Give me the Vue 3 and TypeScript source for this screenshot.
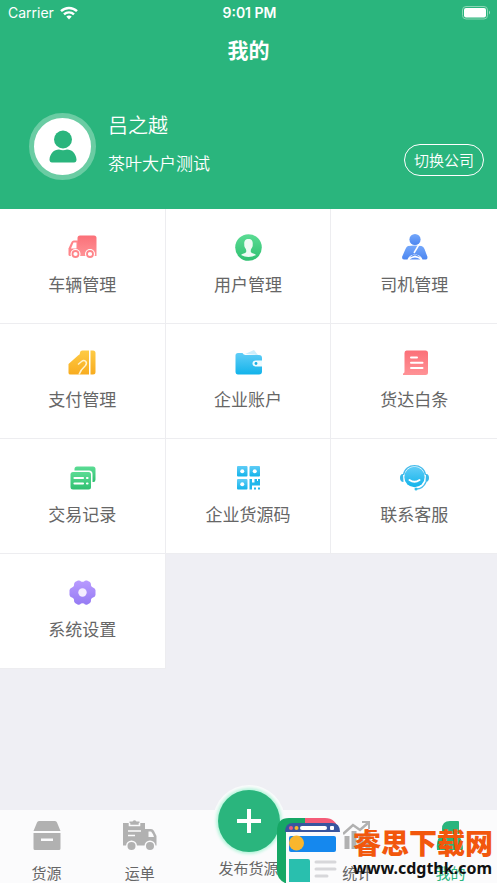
<script setup lang="ts">
interface MenuItem {
  id: string
  label: string
}

const menu: MenuItem[] = [
  { id: 'truck', label: '车辆管理' },
  { id: 'user', label: '用户管理' },
  { id: 'driver', label: '司机管理' },
  { id: 'pay', label: '支付管理' },
  { id: 'wallet', label: '企业账户' },
  { id: 'note', label: '货达白条' },
  { id: 'records', label: '交易记录' },
  { id: 'qr', label: '企业货源码' },
  { id: 'service', label: '联系客服' },
  { id: 'settings', label: '系统设置' },
]
</script>

<template>
  <div class="screen">
    <svg class="defs" aria-hidden="true">
      <defs>
        <linearGradient id="g-red" x1="0" y1="0" x2="0" y2="1"><stop offset="0" stop-color="#fb7078" /><stop offset="1" stop-color="#ff9296" /></linearGradient>
        <linearGradient id="g-green" x1="0" y1="0" x2="0" y2="1"><stop offset="0" stop-color="#5bdc94" /><stop offset="1" stop-color="#2fc071" /></linearGradient>
        <linearGradient id="g-blue" x1="0" y1="0" x2="0" y2="1"><stop offset="0" stop-color="#75a8fb" /><stop offset="1" stop-color="#4c86f0" /></linearGradient>
        <linearGradient id="g-gold" x1="0" y1="0" x2="0" y2="1"><stop offset="0" stop-color="#fecb45" /><stop offset="1" stop-color="#f8ac1f" /></linearGradient>
        <linearGradient id="g-cyan" x1="0" y1="0" x2="0" y2="1"><stop offset="0" stop-color="#60cdf7" /><stop offset="1" stop-color="#12b3ea" /></linearGradient>
        <linearGradient id="g-purple" x1="0" y1="0" x2="0" y2="1"><stop offset="0" stop-color="#b99bff" /><stop offset="1" stop-color="#957bf3" /></linearGradient>
      </defs>
    </svg>

    <header class="header">
      <div class="status">
        <div class="carrier">
          <span>Carrier</span>
          <svg width="18" height="14" viewBox="0 0 18 14" fill="none" stroke="#fff" stroke-width="2.4">
            <path d="M1 5.2C5.5 .9 12.500 .9 17 5.200M4 8.400C6.800 5.700 11.200 5.700 14 8.400" />
            <path d="M6.300 10.600C7.800 9.200 10.200 9.200 11.700 10.600L9 13.400Z" fill="#fff" stroke="none" />
          </svg>
        </div>
        <span class="time">9:01 PM</span>
        <svg class="battery" width="29" height="14" viewBox="0 0 29 14">
          <rect x=".5" y=".5" width="25" height="12.500" rx="3.500" fill="none" stroke="#8ad6b5" />
          <rect x="2" y="2" width="22" height="9.500" rx="2" fill="#fff" />
          <path d="M27 4.500Q29 6.500 27 8.500Z" fill="#a2dfc4" />
        </svg>
      </div>
      <h1 class="title">我的</h1>
      <div class="profile">
        <div class="avatar">
          <svg width="28" height="34" viewBox="0 0 28 34" fill="#2ab57d">
            <circle cx="14" cy="9.500" r="9" />
            <path d="M.5 29.500C1 23.500 5 19.500 10 19.500Q14 21 18 19.500C23 19.500 27 23.500 27.500 29.500Q27.500 32.500 25 32.500H3Q.5 32.500 .5 29.500Z" />
          </svg>
        </div>
        <div class="who">
          <div class="name">吕之越</div>
          <div class="company">茶叶大户测试</div>
        </div>
        <button class="switch" type="button">切换公司</button>
      </div>
    </header>

    <main class="grid">
      <a v-for="item in menu" :key="item.id" class="cell" href="#">
        <svg class="icon" viewBox="0 0 32 32" aria-hidden="true">
          <g v-if="item.id === 'truck'">
            <path d="M11.500 6Q11.500 3.500 14 3.500H28Q30.500 3.500 30.500 6V24H11.500Z" fill="url(#g-red)" />
            <path d="M12 8.500H7.800Q6.200 8.500 5.500 10L2.500 16.500V22.500Q2.500 24 4 24H12Z" fill="#ff858a" />
            <path d="M10.500 10.500V16.500H5L7.500 10.500Z" fill="#fff" />
            <circle cx="9.500" cy="22" r="5" fill="#fff" /><circle cx="24" cy="22" r="5" fill="#fff" />
            <circle cx="9.500" cy="22" r="3" fill="none" stroke="#ff858a" stroke-width="1.800" /><circle cx="24" cy="22" r="3" fill="none" stroke="#ff858a" stroke-width="1.800" />
          </g>
          <g v-else-if="item.id === 'user'">
            <circle cx="16.500" cy="15.500" r="13.300" fill="url(#g-green)" />
            <path d="M16.500 7C12.800 7 12 9.500 12.300 12.500C12 15 13.200 15.500 14.200 18V20C13 21.500 10.500 21.500 9 23Q16.500 27 24 23C22.500 21.500 20 21.500 18.800 20V18C19.800 15.500 21 15 20.700 12.500C21 9.500 20.200 7 16.500 7Z" fill="#eefbf4" />
          </g>
          <g v-else-if="item.id === 'driver'">
            <circle cx="17" cy="7.500" r="5.600" fill="url(#g-blue)" />
            <path d="M10 14Q17 13 23.500 14Q25.500 14.500 26.500 17L29.500 25Q29.500 27.500 28 27.500H6Q4 27.500 4 25L7.500 17Q8.500 14.500 10 14Z" fill="url(#g-blue)" />
            <path d="M21 12.500L16 21" fill="none" stroke="#fff" stroke-width="1.500" />
            <path d="M9.500 28C10.500 20.500 23.500 20.500 24.500 28Z" fill="#fff" />
            <path d="M11.500 25.500Q17 19.500 22.500 25.500L17 23.500ZM11.500 27.500Q17 23.500 22.500 27.500Z" fill="#5c92f4" />
          </g>
          <g v-else-if="item.id === 'pay'">
            <path d="M14 6Q14 3.500 16.500 3.500H23V27.500H4.500Q2.500 27.500 2.500 26V17L12 8.500Q14 7.500 14 6ZM24.500 3.500H27Q29.500 3.500 29.500 6V25Q29.500 27.500 27 27.500H24.500Z" fill="url(#g-gold)" />
            <path d="M12 17.500L15.500 14.500C18.500 12 22 15 19.500 18.500Q14.500 23 13 27.500" fill="none" stroke="#fff3cd" stroke-width="1.500" />
          </g>
          <g v-else-if="item.id === 'wallet'">
            <path d="M13 7L22 3L26 8Z" fill="#cceefc" />
            <path d="M6 6H10.500Q11.500 8 13.500 8H27Q30 8 30 11V24.500Q30 27.500 27 27.500H6Q3.500 27.500 3.500 24.500V8.500Q3.500 6 6 6Z" fill="url(#g-cyan)" />
            <path d="M30 13.500H24Q20.500 13.500 20.500 16.500T24 19.500H30Z" fill="#eefbff" /><circle cx="24" cy="16.500" r="1.400" fill="#19afe3" />
          </g>
          <g v-else-if="item.id === 'note'">
            <path d="M8.500 3.500H27.500Q30 3.500 30 6V25.500Q30 28 27.500 28H5V26.500Q6.500 26.500 6.500 24.500V6Q6.500 3.500 8.500 3.500Z" fill="url(#g-red)" />
            <path d="M13 10.500H19M13 15.800H24.500M13 21H24.500" stroke="#fff" stroke-width="2" stroke-linecap="round" />
          </g>
          <g v-else-if="item.id === 'records'">
            <path d="M11 4.500H27Q29.500 4.500 29.500 7V17.500Q29.500 20 27.500 20H26.500V12Q26.500 8.500 23 8.500H8.500V7Q8.500 4.500 11 4.500Z" fill="url(#g-green)" />
            <rect x="4.500" y="10" width="20.500" height="17.500" rx="2.500" fill="url(#g-green)" />
            <path d="M8.500 16H17M8.500 21.500H17M21 16H21.500M21 21.500H21.500" stroke="#fff" stroke-width="2.200" stroke-linecap="round" />
          </g>
          <g v-else-if="item.id === 'qr'">
            <g fill="url(#g-cyan)">
              <rect x="5" y="4" width="10.500" height="10.500" rx="1" /><rect x="17.500" y="4" width="10.500" height="10.500" rx="1" /><rect x="5" y="17" width="10.500" height="10.500" rx="1" />
            </g>
            <path d="M17.500 17H20V20.500H22.500V17H25V19H26V17H28V23.500H20V27.500H17.500ZM22 25.500H24V27.500H22ZM26 25.500H28V27.500H26Z" fill="#20b7ec" />
            <circle cx="10.250" cy="9.250" r="2" fill="#fff" /><circle cx="22.750" cy="9.250" r="2" fill="#fff" /><circle cx="10.250" cy="22.250" r="2" fill="#fff" />
          </g>
          <g v-else-if="item.id === 'service'">
            <path d="M5 12C2.500 12 2 14 2 16S3 20 5.500 20ZM28 12C30.500 12 31 14 31 16S30 20 27.500 20Z" fill="#39b8e9" />
            <path d="M5.500 13C7 .5 26 .5 27.500 13M28 20Q25 27 18 27" fill="none" stroke="#49bdec" stroke-width="1.400" />
            <circle cx="16.500" cy="15" r="10.200" fill="url(#g-cyan)" /><circle cx="18" cy="27" r="1.500" fill="#31bce8" />
            <path d="M11.500 18Q16.500 21.500 21.500 18" fill="none" stroke="#fff" stroke-width="2" stroke-linecap="round" />
          </g>
          <g v-else>
            <path d="M12 3.500Q14 3 15 4.500Q16.500 5.200 18 4.500Q19 3 21 3.500L24 5Q25.300 6.500 25 8.500Q25.500 10 27 10.500Q29 11 29.500 13V18Q29 20 27 20.500Q25.500 21 25 22.500Q25.300 24.500 24 26L21 27.700Q19 28 18 26.500Q16.500 25.800 15 26.500Q14 28 12 27.700L9 26Q7.700 24.500 8 22.500Q7.500 21 6 20.500Q4 20 3.500 18V13Q4 11 6 10.500Q7.500 10 8 8.500Q7.700 6.500 9 5Z" fill="url(#g-purple)" />
            <circle cx="16.500" cy="15.500" r="4.200" fill="#f3edff" />
          </g>
        </svg>
        <span>{{ item.label }}</span>
      </a>
    </main>

    <nav class="tabs">
      <a class="tab" href="#">
        <svg width="28" height="30" viewBox="0 0 28 30" fill="#b1b1b1">
          <path d="M6 0H22Q23.500 0 24 1.500L27.500 10H.5L4 1.500Q4.500 0 6 0Z" />
          <path fill-rule="evenodd" d="M.5 12H27.500V27.500Q27.500 29 26 29H2Q.5 29 .5 27.500ZM8 17.500V20H20V17.500Z" />
        </svg>
        <span>货源</span>
      </a>
      <a class="tab" href="#">
        <svg width="34" height="31" viewBox="0 0 34 31" fill="#b1b1b1">
          <path d="M0 3H6.500V1.500H9.500Q11.500 -.8 13.500 1.500H16.500V3H22V25.500H0Z" />
          <path d="M22 9H28Q30 9 31 11L33.500 16V25.500H22Z" />
          <path d="M6.500 3V5.500H16.500V3M5 11H18M5 15.500H12" fill="none" stroke="#fbfbfc" stroke-width="1.600" />
          <path d="M25.500 11.500H27.500Q29 11.500 31 17H25.500Z" fill="#fbfbfc" />
          <circle cx="8.500" cy="26" r="5.500" fill="#fbfbfc" /><circle cx="27" cy="26" r="5.500" fill="#fbfbfc" />
          <circle cx="8.500" cy="26" r="4" /><circle cx="27" cy="26" r="4" />
        </svg>
        <span>运单</span>
      </a>
      <a class="tab publish" href="#">
        <span class="plus">
          <svg width="24" height="24" viewBox="0 0 24 24" stroke="#fff" stroke-width="4"><path d="M12 0V24M0 12H24" /></svg>
        </span>
        <span>发布货源</span>
      </a>
      <a class="tab" href="#">
        <svg width="28" height="30" viewBox="0 0 28 30" fill="none" stroke="#b1b1b1">
          <path d="M0 13L10 4L17 9L25 2" stroke-width="2.500" /><path d="M19 1H26V8" stroke-width="2" />
          <path d="M4 15V28M11 10V28M18 14V28M25 11V28" stroke-width="5" />
        </svg>
        <span>统计</span>
      </a>
      <a class="tab active" href="#">
        <svg width="28" height="30" viewBox="0 0 28 30" fill="#2ab57d">
          <path d="M14 0H22Q23 0 23 1V13H6V8Q6 0 14 0ZM4 15H23Q27 20 27 29H1Q0 20 4 15Z" />
        </svg>
        <span>我的</span>
      </a>
    </nav>

    <aside class="mark">
      <svg width="64" height="66" viewBox="0 0 64 66">
        <path d="M8 66Q0 62 0 54V14Q0 1 12 1H28V14H12V66Z" fill="#16a765" />
        <path d="M28 1H48Q59 1 62 14H28Z" fill="#f45b78" />
        <path d="M9 15H63V66H9Z" fill="#fbfbfc" />
        <path d="M8 15Q8 6 16 6H55Q63 6 63 15Z" fill="#38559f" />
        <circle cx="14" cy="11" r="2" fill="#ee5c80" /><circle cx="19.500" cy="11" r="2" fill="#f7b62c" />
        <rect x="23" y="9" width="27" height="4" rx="2" fill="#fff" /><rect x="53" y="9" width="4" height="4" rx="1" fill="#fff" />
        <rect x="12" y="19" width="47" height="16" rx="2" fill="#1588ee" />
        <circle cx="19.500" cy="26" r="7.500" fill="#f9b62d" />
        <path d="M12 42H31Q33 42 33 44V65H12Z" fill="#29bfae" />
        <path d="M39 45H58M39 52H58M39 59H50" stroke="#d7d7da" stroke-width="3" stroke-linecap="round" />
      </svg>
      <div class="mark-text">
        <strong>睿思下载网</strong>
        <b>www.cdgthk.com</b>
      </div>
    </aside>
  </div>
</template>

<style>
body {
  margin: 0;
  background: #efeff4;
}
</style>

<style scoped>
.screen {
  position: relative;
  display: flex;
  flex-direction: column;
  min-height: 100vh;
  overflow: hidden;
  background: #efeff4;
  color: #666;
  font-family: "Noto Sans CJK SC", sans-serif;
}
.defs {
  position: absolute;
  width: 0;
  height: 0;
}
a {
  color: inherit;
  text-decoration: none;
}
.header {
  display: flex;
  flex-direction: column;
  background: #2ab57d;
  color: #fff;
  padding-bottom: 29px;
}
.status {
  display: grid;
  grid-template-columns: 1fr auto 1fr;
  align-items: center;
  height: 26px;
  padding: 0 6px 0 8px;
  font: 14px/26px Inter, sans-serif;
}
.carrier {
  display: flex;
  align-items: center;
  gap: 6px;
}
.time {
  font-weight: 600;
}
.battery {
  justify-self: end;
}
.title {
  margin: 0;
  font-size: 21px;
  line-height: 46px;
  font-weight: 700;
  text-align: center;
}
.profile {
  display: flex;
  align-items: center;
  padding: 41px 13px 0 29px;
}
.avatar {
  display: grid;
  place-items: center;
  box-sizing: border-box;
  width: 67px;
  height: 67px;
  border: 5px solid #6acca3;
  border-radius: 50%;
  background: #fff;
}
.who {
  flex: 1;
  display: flex;
  flex-direction: column;
  gap: 14px;
  padding: 0 0 5px 12px;
  font-weight: 350;
}
.name {
  font-size: 20px;
  line-height: 24px;
}
.company {
  font-size: 17px;
  line-height: 24px;
}
.switch {
  align-self: flex-end;
  height: 32px;
  margin-bottom: 4px;
  padding: 0 9px;
  border: 1px solid #fff;
  border-radius: 16px;
  background: none;
  color: #fff;
  font: 350 15px/28px "Noto Sans CJK SC", sans-serif;
}
.grid {
  display: grid;
  grid-template-columns: repeat(3, 1fr);
  margin-bottom: 64px;
}
.cell {
  display: flex;
  flex-direction: column;
  align-items: center;
  gap: 8px;
  box-sizing: border-box;
  height: 115px;
  padding-top: 23px;
  border-right: 1px solid #ededf0;
  border-bottom: 1px solid #ededf0;
  background: #fff;
  font-size: 17px;
  line-height: 24px;
}
.cell:nth-child(3n) {
  border-right: 0;
}
.icon {
  width: 32px;
  height: 32px;
}
.tabs {
  display: grid;
  grid-template-columns: 3fr 3fr 4fr 3fr 3fr;
  grid-template-rows: 100%;
  height: 73px;
  margin-top: auto;
  background: #fbfbfc;
  font-size: 15px;
  line-height: 20px;
}
.tab {
  display: flex;
  flex-direction: column;
  align-items: center;
  justify-content: flex-end;
  gap: 12px;
}
.tab svg {
  display: block;
}
.publish {
  gap: 6px;
  padding-bottom: 5px;
  white-space: nowrap;
}
.plus {
  display: grid;
  place-items: center;
  width: 62px;
  height: 62px;
  flex: none;
  border-radius: 50%;
  background: #2ab57d;
  box-shadow: 0 0 3px 2px #b8f5dc, 0 0 0 5px #fbfbfc;
}
.active {
  color: #2ab57d;
}
.mark {
  position: absolute;
  right: 4px;
  bottom: 0;
  display: flex;
  align-items: flex-end;
  gap: 12px;
}
.mark svg {
  display: block;
}
.mark-text {
  display: flex;
  flex-direction: column;
  white-space: nowrap;
  padding-bottom: 3px;
}
.mark-text strong {
  color: #f2570c;
  font-size: 28px;
  font-weight: 900;
  line-height: 28px;
}
.mark-text b {
  color: #111;
  font: 700 16px/24px "Noto Sans", sans-serif;
}
</style>
